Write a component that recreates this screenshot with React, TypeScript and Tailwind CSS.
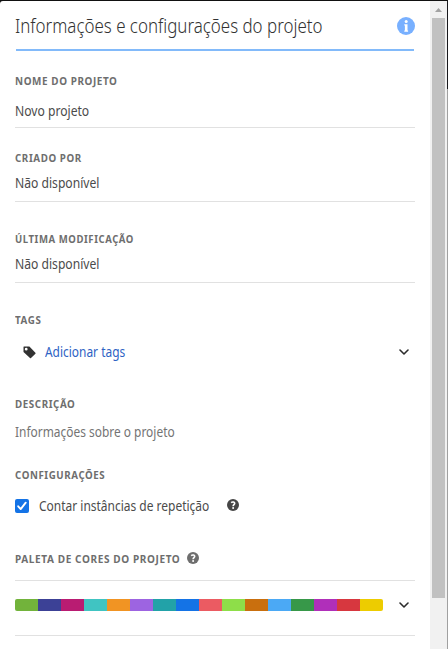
import React from "react";

const palette = [
  "bg-[#72b33b]", "bg-[#3c4196]", "bg-[#b91c72]", "bg-[#40c4c2]",
  "bg-[#f19423]", "bg-[#9d64e1]", "bg-[#22a2a8]", "bg-[#1473e6]",
  "bg-[#eb5b62]", "bg-[#8ede49]", "bg-[#c96f0e]", "bg-[#4ba9f5]",
  "bg-[#379849]", "bg-[#b02fba]", "bg-[#d7373f]", "bg-[#edcc00]",
];

function Label({ children, scale = "scale-x-[0.89]" }: { children: React.ReactNode; scale?: string }) {
  return (
    <h2 className={`h-4 w-max origin-left whitespace-nowrap text-[11px] font-bold leading-4 tracking-[0.66px] text-[#6e6e6e] ${scale}`}>
      {children}
    </h2>
  );
}

function Value({ children, className = "", scale = "scale-x-[0.866]" }: { children: React.ReactNode; className?: string; scale?: string }) {
  return (
    <div className={`h-5 whitespace-nowrap text-[14px] leading-5 ${className}`}>
      <span className={`inline-block origin-left ${scale}`}>{children}</span>
    </div>
  );
}

function Chevron() {
  return (
    <svg className="h-[6px] w-[10px]" viewBox="0 0 10 6" fill="none" stroke="#2c2c2c" strokeWidth="1.6" strokeLinecap="round" strokeLinejoin="round">
      <path d="M1 1l4 4 4-4" />
    </svg>
  );
}

function Help({ className }: { className: string }) {
  return (
    <svg className={`h-3 w-3 ${className}`} viewBox="0 0 12 12">
      <circle cx="6" cy="6" r="6" fill="currentColor" />
      <path d="M4.1 3.6C5.6 2.4 7.8 3 7.7 4.4 7.6 5.6 6.1 5.7 6.1 7.3" fill="none" stroke="#fff" strokeWidth="1.6" />
      <circle cx="6.1" cy="9.1" r="1" fill="#fff" />
    </svg>
  );
}

export default function App() {
  return (
    <div className="flex h-[649px] w-[448px] overflow-hidden border-t border-[#111] bg-[#111] font-['Noto_Sans','Open_Sans',sans-serif] text-[#4b4b4b]">
      <main className="flex h-[648px] w-[430px] flex-col rounded-tl-[3px] bg-white pl-[15px] pr-[15px]">
        <header className="ml-px mr-px flex h-[50px] shrink-0 items-center justify-between border-b-2 border-[#82bafa]">
          <h1 className="-ml-px mt-px w-[370px] origin-left scale-x-[0.846] whitespace-nowrap text-[20px] font-light leading-7 text-[#323232]">Informações e configurações do projeto</h1>
          <svg className="-mr-px mt-[2px] h-[18px] w-[18px] shrink-0" viewBox="0 0 18 18">
            <circle cx="9" cy="9" r="9" fill="#78b0ff" />
            <circle cx="9.2" cy="4.4" r="1.5" fill="#fff" />
            <path d="M7.3 7.2h3.2v6.4h.6v1.2H7.3v-1.2h.6V8.4h-.6z" fill="#fff" />
          </svg>
        </header>

        <section className="h-[77px] shrink-0 border-b border-[#e1e1e1] pt-[22px]">
          <Label scale="scale-x-[0.9]">NOME DO PROJETO</Label>
          <Value className="mt-3">Novo projeto</Value>
        </section>
        <section className="h-[74px] shrink-0 border-b border-[#e1e1e1] pt-[22px]">
          <Label>CRIADO POR</Label>
          <Value className="mt-[7px]">Não disponível</Value>
        </section>
        <section className="h-[81px] shrink-0 border-b border-[#e1e1e1] pt-[29px]">
          <Label scale="scale-x-[0.869]">ÚLTIMA MODIFICAÇÃO</Label>
          <Value className="mt-[7px]">Não disponível</Value>
        </section>

        <section className="mt-[29px] shrink-0">
          <Label>TAGS</Label>
          <div className="mt-[14px] flex h-5 items-center pl-2 pr-[6px]">
            <svg className="mt-px h-[13px] w-[13px]" viewBox="0 0 13 13" fill="#323232">
              <path fillRule="evenodd" d="M.9.5h5.5L12.4 6.7q.5.5 0 1L8 12.1q-.5.5-1 0L.5 6V1Q.5.5.9.5zM3.2 1.8a1.4 1.4 0 100 2.8 1.4 1.4 0 000-2.8z" />
            </svg>
            <Value className="ml-[9px] text-[#2d62c4]" scale="scale-x-[0.852]">Adicionar tags</Value>
            <span className="ml-auto"><Chevron /></span>
          </div>
        </section>

        <section className="mt-[34px] shrink-0">
          <Label>DESCRIÇÃO</Label>
          <Value className="mt-[10px] text-[#747474]" scale="scale-x-[0.852]">Informações sobre o projeto</Value>
        </section>

        <section className="mt-[25px] shrink-0">
          <Label scale="scale-x-[0.885]">CONFIGURAÇÕES</Label>
          <div className="mt-[13px] flex h-5 items-center">
            <span className="flex h-[14px] w-[14px] shrink-0 items-center justify-center rounded-[2px] bg-[#1473e6]">
              <svg className="h-[10px] w-[10px]" viewBox="0 0 10 10" fill="none" stroke="#fff" strokeWidth="1.9" strokeLinecap="round" strokeLinejoin="round">
                <path d="M1.2 5.3l2.5 2.8 5-6.4" />
              </svg>
            </span>
            <Value className="ml-[10px] w-[188px] shrink-0" scale="scale-x-[0.855]">Contar instâncias de repetição</Value>
            <Help className="-mt-[2px] text-[#464646]" />
          </div>
        </section>

        <section className="mt-[35px] shrink-0">
          <div className="flex h-4 items-center">
            <div className="w-[172px] shrink-0"><Label scale="scale-x-[0.912]">PALETA DE CORES DO PROJETO</Label></div>
            <Help className="-mt-[2px] text-[#6e6e6e]" />
          </div>
          <div className="mt-[13px] flex h-14 items-center border-y border-[#e1e1e1] pb-[6px] pr-[6px]">
            <div className="flex h-3 overflow-hidden rounded-[2px]">
              {palette.map((c) => <i key={c} className={`block h-3 w-[23px] ${c}`} />)}
            </div>
            <span className="ml-auto"><Chevron /></span>
          </div>
        </section>
      </main>

      <aside className="flex h-[648px] w-[17px] shrink-0 flex-col items-center bg-[#f1f1f1]">
        <svg className="mt-[7px] h-[4px] w-[7px] shrink-0" viewBox="0 0 7 4"><path d="M3.5 0L7 4H0z" fill="#a3a3a3" /></svg>
        <span className="mt-[6px] h-[580px] w-[13px] shrink-0 bg-[#c1c1c1]" />
      </aside>
      <aside className="h-[648px] w-px shrink-0 bg-[#a0a0a0]"><span className="block h-[88px] w-px bg-[#18181c]" /></aside>
    </div>
  );
}
